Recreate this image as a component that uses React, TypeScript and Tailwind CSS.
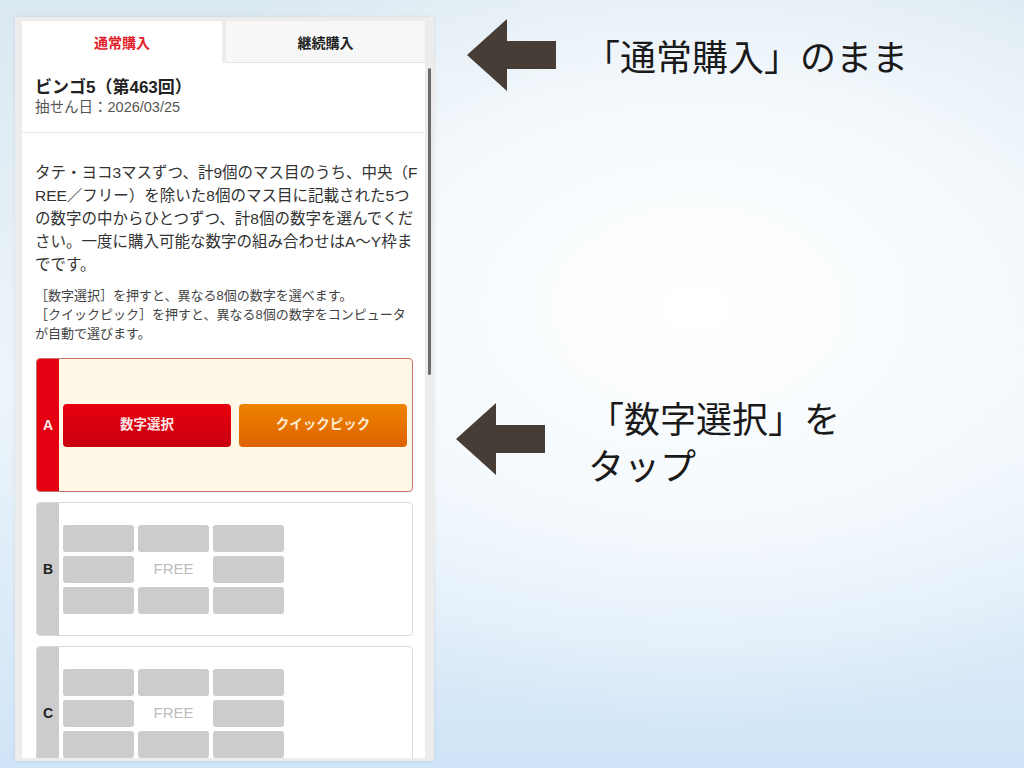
import React from "react";

const phoneFont = "font-['Liberation_Sans','Noto_Sans_CJK_JP',sans-serif]";

function Arrow() {
  return (
    <svg width="89" height="72" viewBox="0 0 89 72" className="shrink-0">
      <polygon points="0,36 40,0 40,22 89,22 89,50 40,50 40,72" fill="#463d37" />
    </svg>
  );
}

function GridCard({ label }: { label: string }) {
  const cells = [0, 1, 2, 3, 4, 5, 6, 7, 8];
  return (
    <div className="flex h-[134px] shrink-0 overflow-hidden rounded-[4px] border border-[#d9d9d9] bg-white">
      <div className="flex w-[22px] shrink-0 items-center justify-center bg-[#cccccc] text-[14px] font-bold text-[#222]">
        {label}
      </div>
      <div className="flex items-center pl-[4px]">
        <div className="grid grid-cols-[71px_71px_71px] auto-rows-[27px] gap-[4px]">
          {cells.map((i) =>
            i === 4 ? (
              <div key={i} className="flex items-center justify-center text-[15px] text-[#bdbdbd]">
                FREE
              </div>
            ) : (
              <div key={i} className="rounded-[3px] bg-[#cccccc]" />
            )
          )}
        </div>
      </div>
    </div>
  );
}

export default function App() {
  return (
    <div className="flex h-[768px] w-[1024px] overflow-hidden bg-[radial-gradient(ellipse_60%_55%_at_68%_40%,#ffffff_0%,#f6fafd_45%,rgba(246,250,253,0)_100%),linear-gradient(180deg,#dae8f1_0%,#edf5fa_50%,#d0e4f7_100%)]">
      {/* phone screenshot */}
      <div
        className={`ml-[15px] mt-[17px] flex h-[744px] w-[419px] shrink-0 bg-[#ececec] pb-[3px] pl-[7px] pt-[4px] shadow-[0_0_4px_rgba(0,0,0,0.08)] ${phoneFont}`}
      >
        <div className="flex w-[403px] flex-col overflow-hidden">
          {/* tabs */}
          <div className="flex h-[42px] shrink-0 gap-[4px]">
            <div className="flex w-[200px] items-center justify-center bg-white pt-[3px] text-[14px] font-bold text-[#e4212b]">
              通常購入
            </div>
            <div className="flex flex-1 items-center justify-center border-b border-[#e4e4e4] bg-[#f7f7f7] pt-[3px] text-[14px] font-bold text-[#222]">
              継続購入
            </div>
          </div>
          {/* content */}
          <div className="flex flex-1 flex-col overflow-hidden bg-white">
            <div className="shrink-0 border-b border-[#e8e8e8] pb-[16px] pl-[13px] pt-[15px]">
              <div className="text-[17px] font-bold leading-[20px] text-[#222]">ビンゴ5（第463回）</div>
              <div className="text-[14.5px] leading-[18px] text-[#555]">抽せん日：2026/03/25</div>
            </div>
            <div className="flex flex-col px-[13px] pt-[28px]">
              <p className="whitespace-nowrap text-[15.5px] leading-[23px] text-[#333]">
                タテ・ヨコ3マスずつ、計9個のマス目のうち、中央（F
                <br />
                REE／フリー）を除いた8個のマス目に記載された5つ
                <br />
                の数字の中からひとつずつ、計8個の数字を選んでくだ
                <br />
                さい。一度に購入可能な数字の組み合わせはA〜Y枠ま
                <br />
                でです。
              </p>
              <p className="mt-[10px] whitespace-nowrap text-[13px] leading-[19px] text-[#444]">
                ［数字選択］を押すと、異なる8個の数字を選べます。
                <br />
                ［クイックピック］を押すと、異なる8個の数字をコンピュータ
                <br />
                が自動で選びます。
              </p>
            </div>
            <div className="mt-[15px] flex flex-col gap-[10px] pl-[14px] pr-[12px]">
              {/* card A */}
              <div className="flex h-[134px] shrink-0 overflow-hidden rounded-[4px] border border-[#c96f6c] bg-[#fff8e7]">
                <div className="flex w-[22px] shrink-0 items-center justify-center bg-[#e50012] text-[14px] font-bold text-[#fdeaea]">
                  A
                </div>
                <div className="flex flex-1 items-center gap-[8px] pl-[4px] pr-[5px]">
                  <div className="flex h-[43px] flex-1 items-center justify-center rounded-[4px] bg-[linear-gradient(180deg,#e8000f_0%,#c8000e_100%)] text-[13.5px] font-bold text-[#fbe3e3]">
                    数字選択
                  </div>
                  <div className="flex h-[43px] flex-1 items-center justify-center rounded-[4px] bg-[linear-gradient(180deg,#ef8200_0%,#dd6300_100%)] text-[13.5px] font-bold text-[#fdebd3]">
                    クイックピック
                  </div>
                </div>
              </div>
              <GridCard label="B" />
              <GridCard label="C" />
            </div>
          </div>
        </div>
        {/* scrollbar strip */}
        <div className="w-[9px] shrink-0">
          <div className="ml-[3px] mt-[47px] h-[307px] w-[3px] rounded-full bg-[#6b6b6b]" />
        </div>
      </div>

      {/* annotations */}
      <div className="flex flex-col font-['Noto_Sans_CJK_JP',sans-serif] text-[#1a1a1a]">
        <div className="ml-[33px] mt-[19px] flex items-center">
          <Arrow />
          <div className="ml-[28px] text-[36px] leading-[44px]">「通常購入」のまま</div>
        </div>
        <div className="ml-[22px] mt-[299px] flex items-center">
          <Arrow />
          <div className="ml-[43px] mt-[4px] text-[36px] leading-[47px]">
            「数字選択」を
            <br />
            タップ
          </div>
        </div>
      </div>
    </div>
  );
}
